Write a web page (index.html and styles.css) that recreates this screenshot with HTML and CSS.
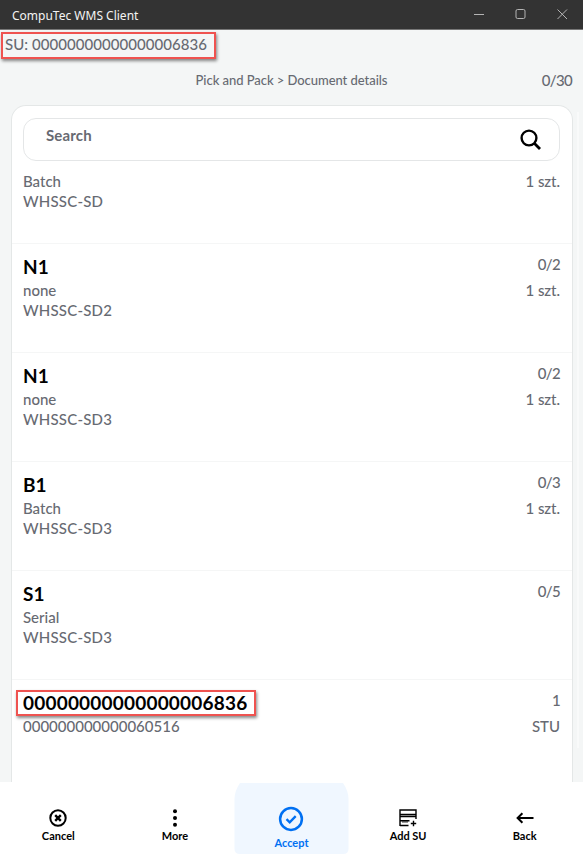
FILE: index.html
```html
<!DOCTYPE html>
<html lang="en">
<head>
<meta charset="utf-8">
<title>CompuTec WMS Client</title>
<link rel="stylesheet" href="styles.css">
</head>
<body>
<header class="titlebar">
  <span class="app-name">CompuTec WMS Client</span>
  <svg class="window-controls" width="94" height="12" viewBox="0 0 94 12" fill="none" stroke="#b4b4b4">
    <path d="M0 6.5h10"/>
    <rect x="42" y="1.5" width="9" height="9" rx="1.5"/>
    <path d="M83.5 1.5l9.5 9.5M93 1.5l-9.5 9.5"/>
  </svg>
</header>
<div class="su-line"><span class="su mark">SU: 00000000000000006836</span></div>
<div class="heading"><span class="crumb">Pick and Pack &gt; Document details</span><span class="count">0/30</span></div>
<main class="content">
  <section class="panel">
    <div class="search"><span class="search-label">Search</span>
      <svg width="22" height="22" viewBox="0 0 22 22" fill="none" stroke="#000" stroke-width="2.4"><circle cx="9" cy="9" r="7.4"/><path d="M14.3 14.3l5.7 5.7" stroke-width="2.8"/></svg>
    </div>
    <div class="row first"><div class="left"><p>Batch</p><p class="wh">WHSSC-SD</p></div><div class="right"><p class="unit">1 szt.</p></div></div>
    <div class="row"><div class="left"><h2>N1</h2><p>none</p><p class="wh">WHSSC-SD2</p></div><div class="right"><p class="qty">0/2</p><p class="unit">1 szt.</p></div></div>
    <div class="row"><div class="left"><h2>N1</h2><p>none</p><p class="wh">WHSSC-SD3</p></div><div class="right"><p class="qty">0/2</p><p class="unit">1 szt.</p></div></div>
    <div class="row"><div class="left"><h2>B1</h2><p>Batch</p><p class="wh">WHSSC-SD3</p></div><div class="right"><p class="qty">0/3</p><p class="unit">1 szt.</p></div></div>
    <div class="row"><div class="left"><h2>S1</h2><p>Serial</p><p class="wh">WHSSC-SD3</p></div><div class="right"><p class="qty">0/5</p></div></div>
    <div class="row"><div class="left"><h2 class="mark su-title">00000000000000006836</h2><p>000000000000060516</p></div><div class="right"><p class="qty">1</p><p>STU</p></div></div>
  </section>
  <div class="scrollbar"></div>
</main>
<nav class="toolbar">
  <div class="action">
    <svg width="18" height="18" viewBox="0 0 18 18" fill="none" stroke="#000" stroke-width="2"><circle cx="9" cy="9" r="7.7"/><path d="M6.2 6.2l5.6 5.6M11.8 6.2l-5.6 5.6" stroke-width="2.4"/></svg>
    <span class="label">Cancel</span>
  </div>
  <div class="action">
    <svg width="18" height="18" viewBox="0 0 18 18"><circle cx="9" cy="2.3" r="2"/><circle cx="9" cy="9" r="2"/><circle cx="9" cy="15.7" r="2"/></svg>
    <span class="label">More</span>
  </div>
  <div class="action primary">
    <svg class="tab" width="115" height="72" viewBox="0 0 115 72"><path d="M6 0H109Q114.500 8 114.500 16V66Q114.500 71 109 71H6Q.5 71 .5 66V16Q.5 8 6 0Z" fill="#f0f7ff"/></svg>
    <svg class="check" width="26" height="26" viewBox="0 0 26 26" fill="none" stroke="#0070f2" stroke-width="2.5"><circle cx="13" cy="13" r="10.9"/><path d="M8.5 13.2l3.2 3.1 6-6.2" stroke-width="2.3"/></svg>
    <span class="label">Accept</span>
  </div>
  <div class="action">
    <svg width="18" height="18" viewBox="0 0 18 18" fill="none" stroke="#000" stroke-width="1.4"><path d="M1 17V1H17V10M1 5.500H17M1 7.500H17M1 11.800H10.500M1 16.500H9.500M14.500 11.800v5.400M11.800 14.500h5.400"/><path d="M3 13h6" stroke-width=".8"/></svg>
    <span class="label">Add SU</span>
  </div>
  <div class="action">
    <svg width="18" height="18" viewBox="0 0 18 18" fill="none" stroke="#000" stroke-width="2"><path d="M17.5 9H1.5M6.4 4.2L1.6 9l4.800 4.800"/></svg>
    <span class="label">Back</span>
  </div>
</nav>
</body>
</html>
```
FILE: styles.css
```css
* { box-sizing: border-box; }
body {
  margin: 0;
  height: 855px;
  display: flex;
  flex-direction: column;
  overflow: hidden;
  background: #f4f6f6;
  color: #676a72;
  font: 500 15px/20px Lato, sans-serif;
}
p, h2 { margin: 0; white-space: nowrap; }
svg { display: block; flex: none; }
.titlebar {
  height: 30px;
  flex: none;
  display: flex;
  justify-content: space-between;
  padding: 6px 15px 0 12px;
  background: #333;
  border-bottom: 1px solid #777;
  color: #f3f3f3;
}
.app-name { font: 12px/20px "Noto Sans", sans-serif; }
.window-controls { margin-top: 2px; }
.mark { border: 2px solid #ef5350; box-shadow: 1px 2px 3px #0007; }
.su-line { height: 38px; flex: none; padding: 2px 0 0 1px; }
.su { display: block; width: 215px; height: 27px; padding: 0 0 0 2px; white-space: nowrap; letter-spacing: .05px; }
.heading { position: relative; height: 37px; flex: none; display: flex; justify-content: center; padding-top: 2px; }
.crumb { font-size: 13px; letter-spacing: -.05px; }
.count { position: absolute; right: 11px; top: 2px; letter-spacing: -.7px; }
.content { height: 677px; flex: none; display: flex; }
.panel {
  width: 562px;
  height: 677px;
  margin-left: 11px;
  border: 1px solid #e4e7e7;
  border-bottom: 0;
  border-radius: 15px 15px 0 0;
  background: #fff;
  overflow: hidden;
  padding-top: 12px;
}
.scrollbar { width: 2px; height: 636px; margin: 7px 0 0 4px; background: #f9fafa; }
.search {
  height: 43px;
  margin: 0 12px 0 11px;
  display: flex;
  justify-content: space-between;
  padding: 6px 17px 0 22px;
  border: 1px solid #e4e6e7;
  border-radius: 13px;
}
.search-label { font-weight: 700; letter-spacing: .15px; }
.search svg { margin-top: 4px; }
.row {
  height: 108.9px;
  display: flex;
  justify-content: space-between;
  border-top: 1px solid #f5f6f6;
  padding: 10px 12px 0 11px;
}
.first { height: 82px; border: 0; }
.right { text-align: right; }
h2 { height: 26px; font: 700 19px/26px Lato, sans-serif; color: #000; }
.qty { height: 26px; line-height: 20px; letter-spacing: -.7px; }
.unit { letter-spacing: -.05px; }
.wh { letter-spacing: .2px; }
.su-title { width: 240px; height: 26px; margin: 0 0 0 -7px; padding-left: 5px; line-height: 22px; letter-spacing: .2px; }
.toolbar { height: 73px; flex: none; display: grid; grid-template-columns: repeat(5, 1fr); background: #fff; }
.action { display: flex; flex-direction: column; align-items: center; padding-top: 27px; position: relative; }
.label { font: 700 11px/16px Lato, sans-serif; color: #000; margin-top: 1px; position: relative; }
.primary { padding-top: 24px; }
.tab { position: absolute; left: 1px; top: 1px; }
.check { position: relative; }
.primary .label { color: #0070f2; margin-top: 3px; }
```
